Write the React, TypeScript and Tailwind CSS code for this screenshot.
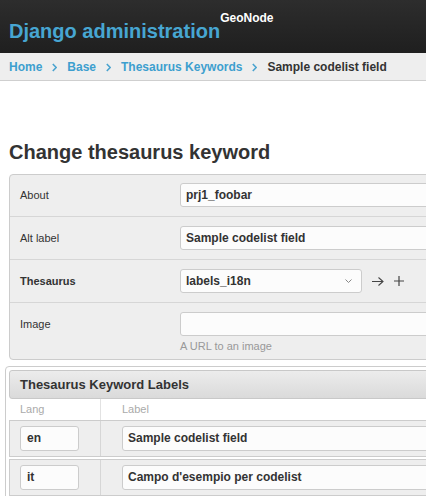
const crumbs = ["Home", "Base", "Thesaurus Keywords"];

function Sep() {
  return (
    <span className="mx-[10px] flex items-center">
      <svg width="5" height="9" viewBox="0 0 5 9">
        <path d="M0.8 1l3.4 3.5L0.8 8" fill="none" stroke="#4aa3cf" strokeWidth="1.6" />
      </svg>
    </span>
  );
}

function TextInput({ value, className = "" }: { value?: string; className?: string }) {
  return (
    <div
      className={`h-[24px] rounded-[3px] border border-[#cccccc] bg-[#fcfcfc] pl-[5px] text-[12px] font-bold leading-[22px] text-[#333] ${className}`}
    >
      {value}
    </div>
  );
}

function Row({
  label,
  bold,
  children,
  last,
  first,
}: {
  label: string;
  bold?: boolean;
  children: React.ReactNode;
  last?: boolean;
  first?: boolean;
}) {
  return (
    <div
      className={`flex items-start pl-[10px] ${first ? "pt-[8px]" : "pt-[9px]"} ${
        last ? "pb-[6px]" : "pb-[9px] border-b border-[#d6d6d6]"
      }`}
    >
      <div
        className={`w-[160px] shrink-0 text-[11px] leading-[24px] text-[#333] ${bold ? "font-bold" : ""}`}
      >
        {label}
      </div>
      <div className="flex-1">{children}</div>
    </div>
  );
}

export default function App() {
  return (
    <div className="h-[496px] w-full overflow-hidden bg-white font-['Liberation_Sans',Arial,sans-serif]">
      {/* header */}
      <div className="flex h-[53px] items-start bg-gradient-to-b from-[#2d2d2d] to-[#1f1f1f] pl-[9px]">
        <h1 className="mt-[19px] text-[20px] font-bold leading-[24px] text-[#47a6d2]">
          Django administration
        </h1>
        <span className="mt-[11px] text-[12px] font-bold leading-[14px] text-white">GeoNode</span>
      </div>

      {/* breadcrumbs */}
      <div className="flex h-[28px] items-center border-b border-[#cfcfcf] bg-[#eeeeee] pl-[9px] pt-[1px] text-[12px] font-bold leading-[14px]">
        {crumbs.map((c) => (
          <span key={c} className="flex items-center">
            <span className="text-[#3d9fcf]">{c}</span>
            <Sep />
          </span>
        ))}
        <span className="text-[#333]">Sample codelist field</span>
      </div>

      <h1 className="ml-[9px] mt-[59px] text-[20px] font-bold leading-[24px] text-[#333]">
        Change thesaurus keyword
      </h1>

      {/* main fieldset */}
      <div className="ml-[9px] mt-[10px] w-[520px] rounded-[4px] border border-[#cccccc] bg-[#eeeeee]">
        <Row label="About" first>
          <TextInput value="prj1_foobar" />
        </Row>
        <Row label="Alt label">
          <TextInput value="Sample codelist field" />
        </Row>
        <Row label="Thesaurus" bold>
          <div className="flex items-center">
            <div className="flex h-[24px] w-[182px] items-center justify-between rounded-[3px] border border-[#cccccc] bg-[#fcfcfc] pl-[5px] pr-[9px] text-[12px] font-bold text-[#333]">
              <span>labels_i18n</span>
              <svg width="7" height="4" viewBox="0 0 7 4">
                <path d="M0.5 0.5l3 3 3-3" fill="none" stroke="#888" strokeWidth="1" />
              </svg>
            </div>
            <svg className="ml-[10px]" width="12" height="9" viewBox="0 0 12 9">
              <path d="M0 4.5h11M6.5 0.5l4.5 4-4.5 4" fill="none" stroke="#444" strokeWidth="1.1" />
            </svg>
            <svg className="ml-[10px]" width="10" height="10" viewBox="0 0 10 10">
              <path d="M5 0v10M0 5h10" fill="none" stroke="#444" strokeWidth="1.2" />
            </svg>
          </div>
        </Row>
        <Row label="Image" last>
          <TextInput />
          <div className="mt-[4px] text-[11px] leading-[13px] text-[#999]">A URL to an image</div>
        </Row>
      </div>

      {/* inline labels */}
      <div className="ml-[5px] mt-[6px] w-[540px] rounded-t-[4px] border border-[#cccccc] px-[3px] pt-[3px]">
        <div className="flex h-[29px] items-center rounded-[3px] border border-[#c8c8c8] bg-gradient-to-b from-[#ececec] to-[#dadada] pl-[10px] text-[13px] font-bold text-[#333]">
          Thesaurus Keyword Labels
        </div>
        <div className="flex h-[21px] items-center text-[11px] text-[#aaaaaa]">
          <div className="flex h-full w-[92px] items-center border-r border-[#e2e2e2] pl-[11px]">Lang</div>
          <div className="pl-[21px]">Label</div>
        </div>
        {[
          ["en", "Sample codelist field"],
          ["it", "Campo d'esempio per codelist"],
        ].map(([lang, label]) => (
          <div key={lang} className="mb-[2px] flex border border-[#cccccc] bg-[#eeeeee]">
            <div className="w-[91px] border-r border-[#d6d6d6] py-[5px] pl-[10px]">
              <TextInput value={lang} className="h-[25px] w-[59px] pl-[6px] leading-[23px]" />
            </div>
            <div className="flex-1 py-[5px] pl-[21px]">
              <TextInput value={label} className="h-[25px] leading-[23px]" />
            </div>
          </div>
        ))}
      </div>
    </div>
  );
}
